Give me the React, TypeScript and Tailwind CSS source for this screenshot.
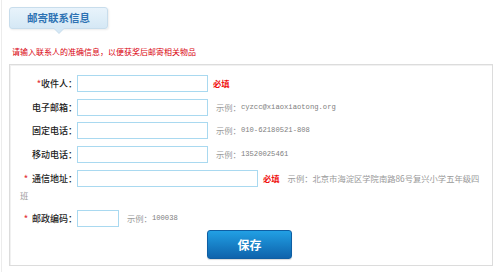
import React from "react";

function Label({ text, star }: { text: string; star?: "tight" | "spaced" }) {
  return (
    <span className="w-[57px] shrink-0 text-right text-[9px] font-medium leading-[17px] text-[#222]">
      {star === "tight" && <span className="text-[#e4393c]">*</span>}
      {star === "spaced" && <span className="text-[#e4393c] mr-[4px]">*</span>}
      {text}
    </span>
  );
}

function Field({ w }: { w: string }) {
  return (
    <input
      type="text"
      className={`shrink-0 h-[17px] border border-[#a9d9f0] bg-white outline-none ${w}`}
    />
  );
}

const mono = "font-['Liberation_Mono',monospace] text-[7.2px] text-[#808080]";
const hint = "text-[8.3px] text-[#999]";
const req = "text-[8.3px] text-[#f01010] font-bold";
const row = "flex items-center pl-[10px] h-[17px] whitespace-nowrap";

export default function App() {
  return (
    <div className="w-[499px] h-[272px] ml-[1px] bg-white border-l border-[#ececec] pl-[7px] pt-[7px] font-['Noto_Sans_CJK_SC','Noto_Sans',sans-serif] overflow-hidden">
      <div className="relative w-[99px] h-[22px] rounded-[3px] border border-[#c8ddec] bg-gradient-to-b from-[#e8f3fb] to-[#d5e8f5] shadow-[1px_1px_2px_rgba(0,0,0,0.08)] flex items-center justify-center text-[10.5px] font-bold text-[#2d72b3]">
        邮寄联系信息
        <span className="absolute left-[43px] -bottom-[6px] w-0 h-0 border-x-[6px] border-x-transparent border-t-[6px] border-t-[#c8ddec]" />
        <span className="absolute left-[44px] -bottom-[5px] w-0 h-0 border-x-[5px] border-x-transparent border-t-[5px] border-t-[#d5e8f5]" />
      </div>

      <div className="mt-[17px] ml-[3px] text-[8px] leading-[12px] text-[#d9000d]">
        请输入联系人的准确信息，以便获奖后邮寄相关物品
      </div>

      <div className="mt-[6px] w-[484px] h-[202px] border border-[#dcdcdc] shadow-[inset_1px_1px_0_#f1f1f1] pt-[10px]">
        <div className={row}>
          <Label text="收件人：" star="tight" />
          <Field w="w-[131px]" />
          <span className={`${req} ml-[5px]`}>必填</span>
        </div>
        <div className={`${row} mt-[7px]`}>
          <Label text="电子邮箱：" />
          <Field w="w-[131px]" />
          <span className={`${hint} ml-[8px]`}>示例：</span>
          <span className={mono}>cyzcc@xiaoxiaotong.org</span>
        </div>
        <div className={`${row} mt-[6px]`}>
          <Label text="固定电话：" />
          <Field w="w-[131px]" />
          <span className={`${hint} ml-[8px]`}>示例：</span>
          <span className={mono}>010-62180521-808</span>
        </div>
        <div className={`${row} mt-[7px]`}>
          <Label text="移动电话：" />
          <Field w="w-[131px]" />
          <span className={`${hint} ml-[8px]`}>示例：</span>
          <span className={mono}>13520025461</span>
        </div>
        <div className={`${row} mt-[7px]`}>
          <Label text="通信地址：" star="spaced" />
          <Field w="w-[181px]" />
          <span className={`${req} ml-[5px]`}>必填</span>
          <span className={`${hint} ml-[8px]`}>示例：北京市海淀区学院南路86号复兴小学五年级四</span>
        </div>
        <div className={row}>
          <span className={hint}>班</span>
        </div>
        <div className={`${row} mt-[6px]`}>
          <Label text="邮政编码：" star="spaced" />
          <Field w="w-[42px]" />
          <span className={`${hint} ml-[8px]`}>示例：</span>
          <span className={mono}>100038</span>
        </div>
        <button className="block mt-[3px] ml-[197px] w-[85px] h-[29px] rounded-[3px] border border-[#0e5ea3] bg-gradient-to-b from-[#22a0e4] to-[#0f63ac] text-white text-[12px] font-bold leading-[27px] shadow-[0_1px_1px_rgba(0,0,0,0.15)]">
          保存
        </button>
      </div>
    </div>
  );
}
